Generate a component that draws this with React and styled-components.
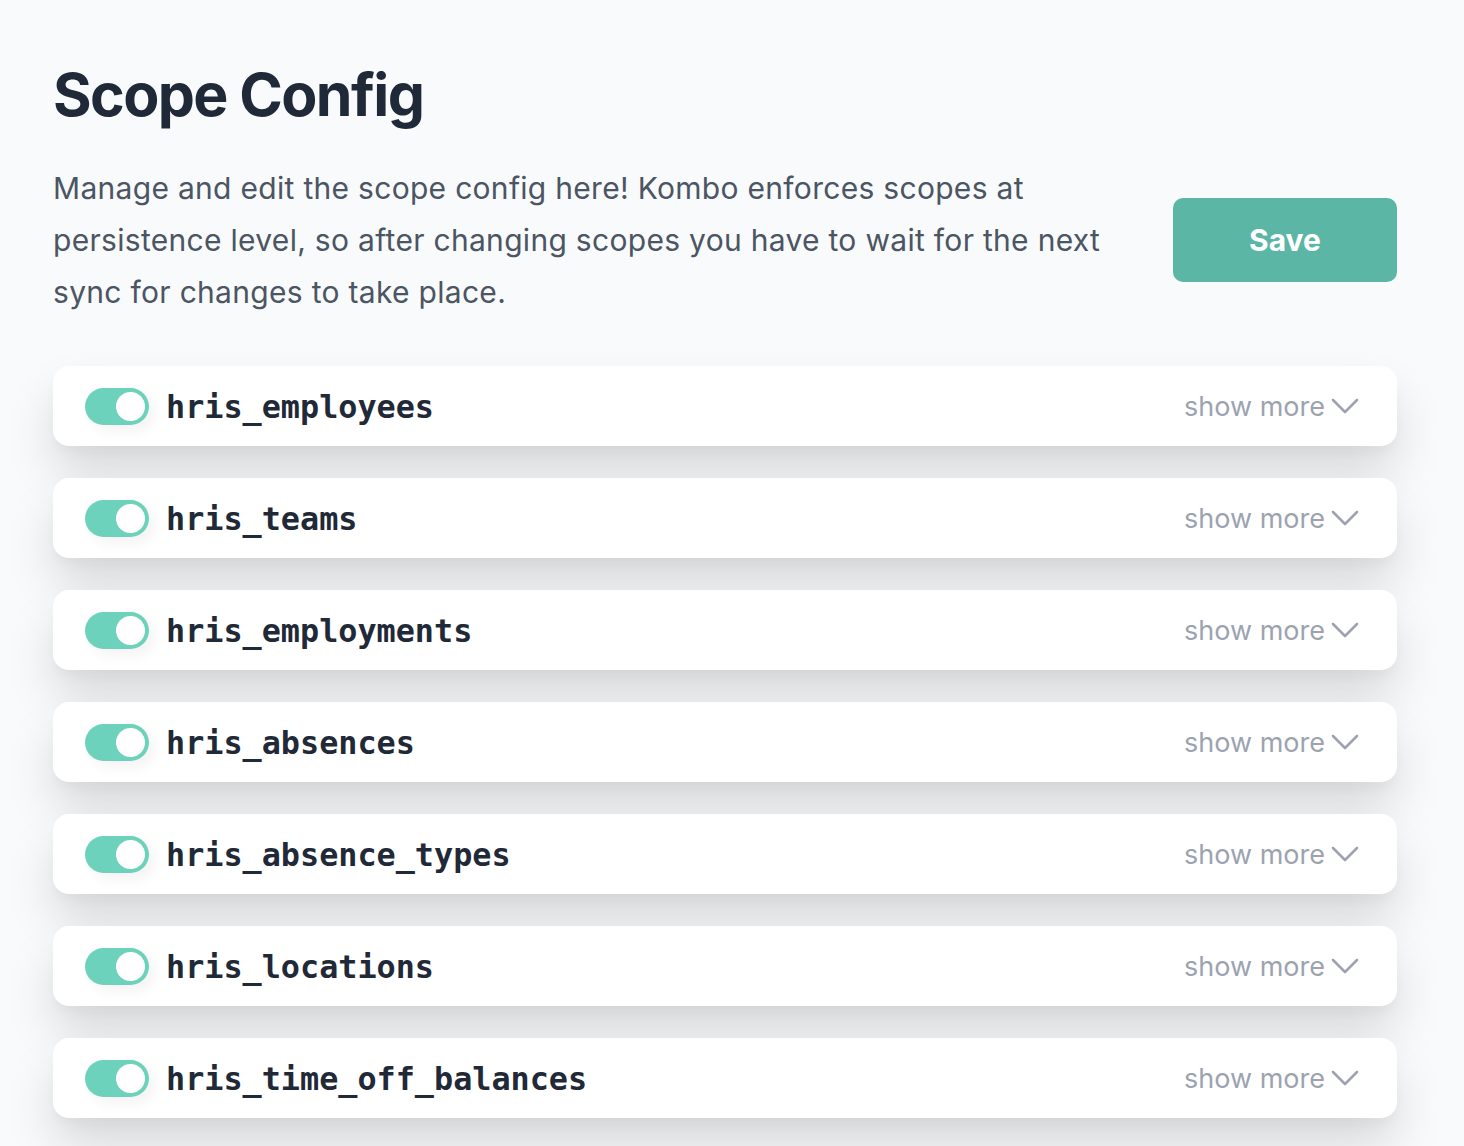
import React from "react";
import styled, { createGlobalStyle } from "styled-components";

const Global = createGlobalStyle`
  html, body { margin: 0; padding: 0; background: #f9fafb; }
  body { font-family: Inter, "Noto Sans", sans-serif; -webkit-font-smoothing: antialiased; }
`;

const Page = styled.main`
  min-height: 1146px;
  box-sizing: border-box;
  padding: 59px 67px 40px 53px;
  background: #f9fafb;
`;

const Title = styled.h1`
  margin: 0;
  font-size: 59px;
  line-height: 72px;
  font-weight: 700;
  color: #1f2937;
  letter-spacing: -1.6px;
`;

const IntroRow = styled.div`
  display: flex;
  align-items: center;
  justify-content: space-between;
  gap: 56px;
  margin-top: 31px;
`;

const Description = styled.p`
  margin: 0;
  flex: 1;
  font-size: 30px;
  line-height: 52px;
  color: #4b5563;
  letter-spacing: 0.3px;
`;

const SaveButton = styled.button`
  flex: none;
  width: 224px;
  height: 84px;
  border: none;
  border-radius: 10px;
  background: #5bb6a6;
  color: #fff;
  font-family: Inter, sans-serif;
  font-size: 30px;
  font-weight: 700;
  cursor: pointer;
`;

const List = styled.div`
  display: flex;
  flex-direction: column;
  gap: 32px;
  margin-top: 48px;
`;

const Card = styled.div`
  display: flex;
  align-items: center;
  height: 80px;
  box-sizing: border-box;
  padding: 0 38px 0 32px;
  background: #fff;
  border-radius: 16px;
  box-shadow: 0 28px 50px -2px rgba(0, 0, 0, 0.14), 0 8px 14px -4px rgba(0, 0, 0, 0.04);
`;

const Toggle = styled.span`
  position: relative;
  flex: none;
  width: 64px;
  height: 37px;
  border-radius: 19px;
  background: #6dd2bc;
  box-shadow: 6px 6px 14px rgba(0, 0, 0, 0.05);
  &::after {
    content: "";
    position: absolute;
    top: 4px;
    right: 4px;
    width: 29px;
    height: 29px;
    border-radius: 50%;
    background: #fff;
  }
`;

const ScopeName = styled.span`
  margin-left: 17px;
  flex: 1;
  font-family: "DejaVu Sans Mono", "Liberation Mono", monospace;
  font-weight: 700;
  font-size: 31.8px;
  color: #1f2937;
`;

const ShowMore = styled.button`
  display: flex;
  align-items: center;
  gap: 6px;
  border: none;
  background: none;
  padding: 0;
  font-family: Inter, sans-serif;
  font-size: 27px;
  color: #9ca3af;
  cursor: pointer;
`;

const Chevron = () => (
  <svg width="28" height="16" viewBox="0 0 28 16" fill="none">
    <path d="M2 2l12 12L26 2" stroke="#9ca3af" strokeWidth="2.6" strokeLinecap="round" strokeLinejoin="round" />
  </svg>
);

const scopes = [
  "hris_employees",
  "hris_teams",
  "hris_employments",
  "hris_absences",
  "hris_absence_types",
  "hris_locations",
  "hris_time_off_balances",
];

export default function App() {
  return (
    <>
      <Global />
      <Page>
        <Title>Scope Config</Title>
        <IntroRow>
          <Description>
            Manage and edit the scope config here! Kombo enforces scopes at persistence level, so after changing scopes
            you have to wait for the next sync for changes to take place.
          </Description>
          <SaveButton>Save</SaveButton>
        </IntroRow>
        <List>
          {scopes.map((s) => (
            <Card key={s}>
              <Toggle />
              <ScopeName>{s}</ScopeName>
              <ShowMore>
                show more
                <Chevron />
              </ShowMore>
            </Card>
          ))}
        </List>
      </Page>
    </>
  );
}
